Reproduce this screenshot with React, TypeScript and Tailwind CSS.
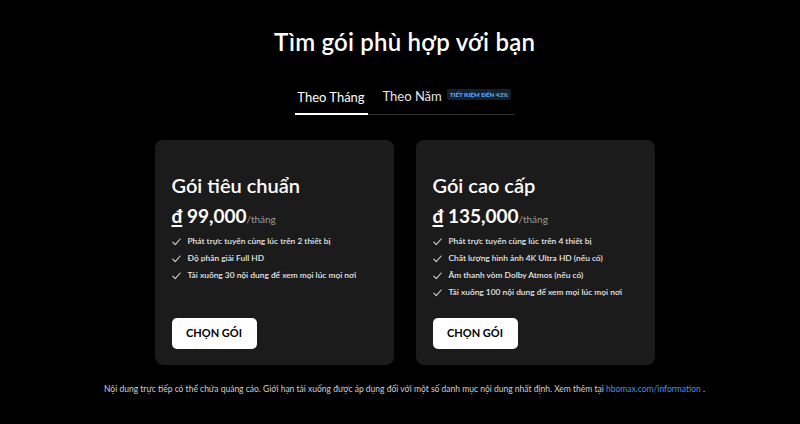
import React from "react";

type Plan = {
  name: string;
  price: string;
  features: string[];
};

const plans: Plan[] = [
  {
    name: "Gói tiêu chuẩn",
    price: "99,000",
    features: [
      "Phát trực tuyến cùng lúc trên 2 thiết bị",
      "Độ phân giải Full HD",
      "Tải xuống 30 nội dung để xem mọi lúc mọi nơi",
    ],
  },
  {
    name: "Gói cao cấp",
    price: "135,000",
    features: [
      "Phát trực tuyến cùng lúc trên 4 thiết bị",
      "Chất lượng hình ảnh 4K Ultra HD (nếu có)",
      "Âm thanh vòm Dolby Atmos (nếu có)",
      "Tải xuống 100 nội dung để xem mọi lúc mọi nơi",
    ],
  },
];

function Check() {
  return (
    <svg width="9" height="8" viewBox="0 0 9 8" fill="none" className="shrink-0">
      <path d="M0.8 4.2 L3.2 6.6 L8.2 1" stroke="#d4d4d4" strokeWidth="1.1" strokeLinecap="round" strokeLinejoin="round" />
    </svg>
  );
}

function PlanCard({ plan }: { plan: Plan }) {
  return (
    <div className="flex h-[225px] w-[239px] flex-col rounded-[8px] bg-[#1b1b1b] px-[17px] pb-[16px] pt-[33px]">
      <h2 className="text-[20px] font-semibold leading-[24px] text-white">{plan.name}</h2>
      <div className="mt-[8px] flex items-baseline">
        <span className="text-[19px] font-bold leading-[22px] text-white">
          <span className="underline decoration-[2px] underline-offset-[2px]">đ</span> {plan.price}
        </span>
        <span className="text-[10px] text-[#9a9a9a]">/tháng</span>
      </div>
      <ul className="mt-[6px] flex flex-col">
        {plan.features.map((f) => (
          <li key={f} className="flex h-[17px] items-center gap-[7px] text-[8.4px] font-semibold text-[#e6e6e6]">
            <Check />
            <span>{f}</span>
          </li>
        ))}
      </ul>
      <button className="mt-auto flex h-[31px] w-[85px] items-center justify-center rounded-[5px] bg-white text-[11px] font-bold text-black">
        CHỌN GÓI
      </button>
    </div>
  );
}

export default function App() {
  return (
    <div
      className="flex min-h-[424px] w-full flex-col items-center bg-black pl-[9px] text-white"
      style={{ fontFamily: "Lato, 'Noto Sans', sans-serif" }}
    >
      <h1 className="mt-[27px] text-[24px] font-semibold leading-[30px] tracking-[0.2px]">Tìm gói phù hợp với bạn</h1>

      <div className="mt-[26px] flex w-[220px] items-end border-b border-[#333]">
        <div className="-mb-px flex h-[31px] w-[73px] items-start justify-center border-b-2 border-white pt-[4px] text-[13px] text-white">
          Theo Tháng
        </div>
        <div className="flex h-[31px] items-start gap-[5px] pl-[15px] pt-[4px] text-[13px] text-[#e6e6e6]">
          <span>Theo Năm</span>
          <span className="mt-[2px] rounded-[2px] bg-[#14202e] px-[3px] py-[2px] text-[6.2px] font-extrabold leading-[7px] text-[#5aa2ec]">
            TIẾT KIỆM ĐẾN 42%
          </span>
        </div>
      </div>

      <div className="mt-[25px] flex gap-[22px]">
        {plans.map((p) => (
          <PlanCard key={p.name} plan={p} />
        ))}
      </div>

      <p className="mt-[18px] text-[8.5px] text-[#d0d0d0]">
        Nội dung trực tiếp có thể chứa quảng cáo. Giới hạn tải xuống được áp dụng đối với một số danh mục nội dung nhất định. Xem thêm tại{" "}
        <span className="text-[#4d8fe0]">hbomax.com/information</span> .
      </p>
    </div>
  );
}
